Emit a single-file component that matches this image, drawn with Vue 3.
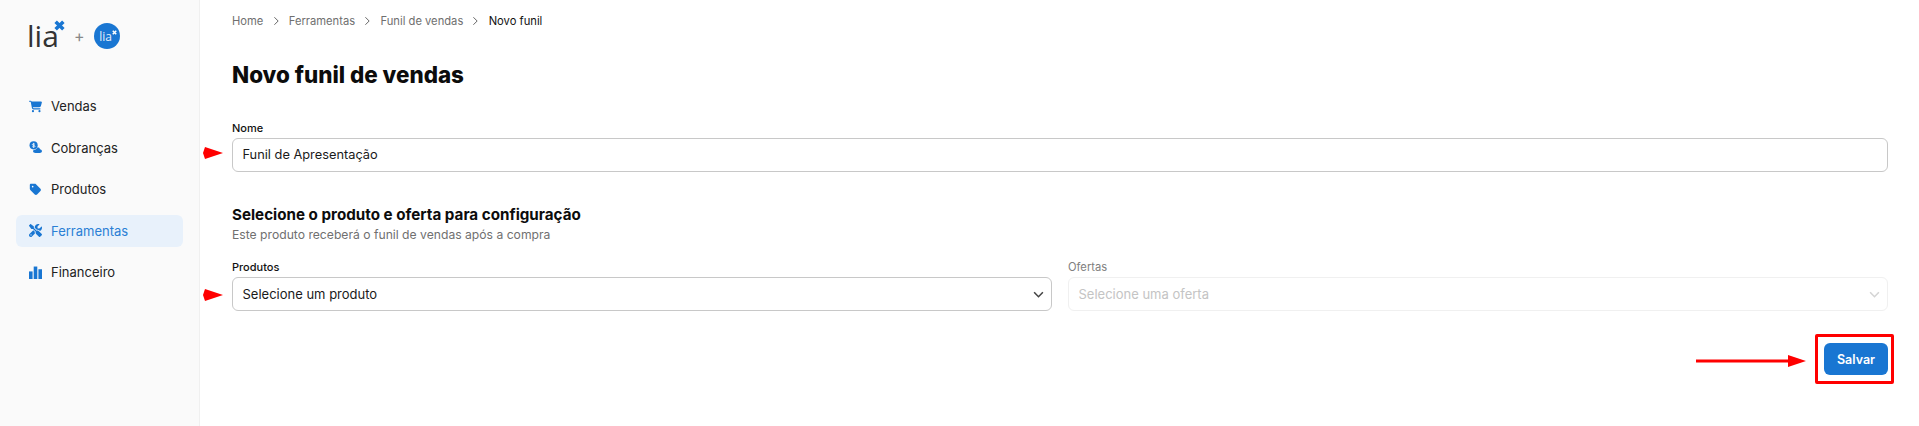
<template>
<div class="layout">
    <aside class="sidebar">
        <div class="brand">
            <div class="logo">
                <span class="logo__text">lia</span>
                <svg class="logo__x" viewBox="0 0 10 10"><path d="M1.5 1.5l7 7M8.5 1.5l-7 7" /></svg>
            </div>
            <span class="brand__plus">+</span>
            <div class="badge">
                <span class="badge__text">lia</span>
                <svg class="badge__x" viewBox="0 0 10 10"><path d="M1.5 1.5l7 7M8.5 1.5l-7 7" /></svg>
            </div>
        </div>
        <nav class="nav">
            <a v-for="item in menu" :key="item.label" class="nav__item" :class="{ 'nav__item--active': item.active }">
                <svg class="nav__icon" :viewBox="item.box" v-html="item.icon"></svg>
                <span>{{ item.label }}</span>
            </a>
        </nav>
    </aside>

    <main class="content">
        <div class="crumbs">
            <template v-for="(crumb, i) in crumbs" :key="crumb">
                <span :class="{ 'crumbs__last': i === crumbs.length - 1 }">{{ crumb }}</span>
                <svg v-if="i < crumbs.length - 1" class="crumbs__sep" viewBox="0 0 8 12"><path d="M1.5 1.5L6 6l-4.5 4.5" /></svg>
            </template>
        </div>

        <h1 class="title">Novo funil de vendas</h1>

        <div class="field">
            <label class="label">Nome</label>
            <div class="control">
                <svg class="mark mark--name" viewBox="0 0 20 12"><path d="M0 6l2-6 18 6-18 6z" /></svg>
                <input class="input input--name" type="text" v-model="name">
            </div>
        </div>

        <h2 class="subtitle">Selecione o produto e oferta para configuração</h2>
        <p class="hint">Este produto receberá o funil de vendas após a compra</p>

        <div class="selects">
            <div class="field">
                <label class="label">Produtos</label>
                <div class="control">
                    <svg class="mark" viewBox="0 0 20 12"><path d="M0 6l2-6 18 6-18 6z" /></svg>
                    <div class="input select">
                        <span>Selecione um produto</span>
                        <svg class="select__arrow" viewBox="0 0 12 8"><path d="M1 1.5l5 5 5-5" /></svg>
                    </div>
                </div>
            </div>
            <div class="field field--off">
                <label class="label">Ofertas</label>
                <div class="input select">
                    <span>Selecione uma oferta</span>
                    <svg class="select__arrow" viewBox="0 0 12 8"><path d="M1 1.5l5 5 5-5" /></svg>
                </div>
            </div>
        </div>

        <div class="actions">
            <div class="save">
                <svg class="save__arrow" viewBox="0 0 110 12"><path d="M0 4.500h92V0l18 6-18 6V7.500H0z" /></svg>
                <span class="save__box"></span>
                <button class="btn">Salvar</button>
            </div>
        </div>
    </main>
</div>
</template>

<script setup>
import { ref } from 'vue'

const name = ref('Funil de Apresentação')
const crumbs = ['Home', 'Ferramentas', 'Funil de vendas', 'Novo funil']

const menu = [
    {
        label: 'Vendas',
        box: '0 0 576 512',
        icon: '<path d="M0 24C0 10.7 10.7 0 24 0H69.5c22 0 41.5 12.8 50.6 32h411c26.3 0 45.5 25 38.6 50.4l-41 152.3c-8.5 31.4-37 53.3-69.5 53.3H170.7l5.4 28.5c2.2 11.3 12.1 19.5 23.6 19.5H488c13.3 0 24 10.7 24 24s-10.7 24-24 24H199.7c-34.6 0-64.3-24.6-70.7-58.5L77.4 54.5c-.7-3.8-4-6.5-7.9-6.5H24C10.7 48 0 37.3 0 24zM128 464a48 48 0 1 1 96 0 48 48 0 1 1 -96 0zm336-48a48 48 0 1 1 0 96 48 48 0 1 1 0-96z"/>'
    },
    {
        label: 'Cobranças',
        box: '0 0 24 24',
        icon: '<circle cx="8.500" cy="8" r="7.500"/><path d="M11 6.500c-.5-1-1.500-1.300-2.500-1.300-1.300 0-2.300.6-2.300 1.500 0 2 5 1 5 3 0 1-1 1.600-2.500 1.600-1.200 0-2.200-.5-2.700-1.300M8.500 3.500v9" fill="none" stroke="#fafafa" stroke-width="1.500"/><path d="M16 11.500c2.200 0 4 1.500 4.300 3.500 2 .3 3.700 1.700 3.700 3.500 0 2.500-2 3.500-4 3.500h-8c-2.500 0-4.500-1.200-4.500-3.200 0-1 .5-1.800 1.200-2.300 3 0 5.500-2 7.300-5z"/>'
    },
    {
        label: 'Produtos',
        box: '0 0 448 512',
        icon: '<path d="M0 80V229.500c0 17 6.700 33.300 18.700 45.300l176 176c25 25 65.500 25 90.500 0L418.700 317.300c25-25 25-65.500 0-90.500l-176-176c-12-12-28.300-18.700-45.300-18.700H48C21.500 32 0 53.500 0 80zm112 32a32 32 0 1 1 0 64 32 32 0 1 1 0-64z"/>'
    },
    {
        label: 'Ferramentas',
        active: true,
        box: '0 0 512 512',
        icon: '<path d="M78.600 5C69.100-2.400 55.600-1.500 47 7L7 47c-8.500 8.500-9.400 22-2.100 31.600l80 104c4.500 5.900 11.600 9.400 19 9.400h54.100l109 109c-14.700 29-10 65.400 14.300 89.600l112 112c12.500 12.500 32.800 12.500 45.300 0l64-64c12.500-12.500 12.500-32.800 0-45.300l-112-112c-24.200-24.200-60.600-29-89.600-14.300l-109-109V104c0-7.500-3.500-14.500-9.400-19L78.600 5zM19.900 396.100C7.200 408.800 0 426.100 0 444.100C0 481.600 30.400 512 67.900 512c18 0 35.300-7.200 48-19.900L233.700 374.300c-7.800-20.900-9-43.600-3.600-65.100l-61.700-61.700L19.900 396.100zM512 144c0-10.500-1.100-20.700-3.200-30.500c-2.400-11.200-16.100-14.100-24.200-6l-63.900 63.900c-3 3-7.100 4.700-11.300 4.700H352c-8.800 0-16-7.200-16-16V102.600c0-4.200 1.700-8.300 4.700-11.300l63.900-63.900c8.100-8.100 5.200-21.800-6-24.200C388.700 1.100 378.500 0 368 0C288.500 0 224 64.500 224 144l0 .8 85.300 85.300c36-9.100 75.800 .5 104 28.700L429 274.500c49-23 83-72.800 83-130.500zM56 432a24 24 0 1 1 48 0 24 24 0 1 1 -48 0z"/>'
    },
    {
        label: 'Financeiro',
        box: '0 0 12 12',
        icon: '<rect x="0" y="5" width="3.300" height="7"/><rect x="4.350" y="0.500" width="3.300" height="11.500"/><rect x="8.700" y="3" width="3.300" height="9"/>'
    }
]
</script>

<style>
html, body {
    margin: 0;
    background: #fff;
}
</style>

<style scoped>
.layout {
    display: flex;
    min-height: 426px;
    font-family: Inter, "Liberation Sans", sans-serif;
    color: #111;
}

.sidebar {
    flex: 0 0 200px;
    box-sizing: border-box;
    padding: 0 16px;
    background: #fafafa;
    border-right: 1px solid #f0f0f0;
}

.brand {
    height: 90px;
    display: flex;
    align-items: center;
    padding: 0 0 18px 11px;
    box-sizing: border-box;
}

.logo {
    position: relative;
    width: 38px;
    height: 32px;
    display: flex;
    align-items: center;
}

.logo__text {
    font-family: "Open Sans", sans-serif;
    font-weight: 400;
    font-size: 30px;
    line-height: 32px;
    color: #333;
}

.logo__x {
    position: absolute;
    top: 0;
    left: 27px;
    width: 11px;
    height: 11px;
    fill: none;
    stroke: #1976d2;
    stroke-width: 3.2;
}

.brand__plus {
    margin-left: 9px;
    font-size: 16px;
    line-height: 20px;
    color: #888;
}

.badge {
    position: relative;
    margin-left: 9px;
    width: 26px;
    height: 26px;
    border-radius: 50%;
    background: #1976d2;
    display: flex;
    align-items: center;
    justify-content: center;
}

.badge__text {
    font-family: "Open Sans", sans-serif;
    font-weight: 400;
    font-size: 12px;
    color: #e8f1fb;
    margin-right: 2px;
}

.badge__x {
    position: absolute;
    top: 7px;
    right: 3px;
    width: 5px;
    height: 5px;
    fill: none;
    stroke: #fff;
    stroke-width: 3;
}

.nav {
    display: flex;
    flex-direction: column;
    gap: 9.6px;
}

.nav__item {
    height: 32px;
    display: flex;
    align-items: center;
    gap: 9px;
    padding-left: 13px;
    border-radius: 6px;
    font-size: 13px;
    color: #222;
}

.nav__item--active {
    background: #e8f1fb;
    color: #2a7fd5;
}

.nav__icon {
    width: 13px;
    height: 13px;
    flex: none;
    fill: #1976d2;
}

.content {
    flex: 1;
    min-width: 0;
    padding: 12px 31px 0 32px;
}

.crumbs {
    height: 18px;
    display: flex;
    align-items: center;
    gap: 9.2px;
    font-size: 11.2px;
    color: #6f6f6f;
}

.crumbs__last {
    color: #111;
}

.crumbs__sep {
    width: 7px;
    height: 10px;
    fill: none;
    stroke: #666;
    stroke-width: 1.2;
}

.title {
    margin: 29px 0 29px;
    font-size: 22.4px;
    line-height: 32px;
    font-weight: 800;
    color: #0c0c0c;
}

.field {
    flex: 1;
    min-width: 0;
}

.label {
    display: block;
    margin-bottom: 2px;
    font-size: 11px;
    line-height: 16px;
    font-weight: 500;
    color: #111;
}

.control {
    position: relative;
}

.mark {
    position: absolute;
    left: -29px;
    top: 12px;
    width: 20px;
    height: 12px;
    fill: #f00;
}

.mark--name {
    top: 9px;
}

.input {
    display: block;
    box-sizing: border-box;
    width: 100%;
    height: 34px;
    padding: 0 10px 0 9.5px;
    border: 1px solid #c8c8c8;
    border-radius: 6px;
    background: #fff;
    font-family: inherit;
    font-size: 13px;
    color: #1a1a1a;
    outline: none;
}

.input--name {
    padding-bottom: 2px;
    font-size: 12.8px;
}

.subtitle {
    margin: 31px 0 0;
    font-size: 15.2px;
    line-height: 24px;
    font-weight: 700;
    color: #0c0c0c;
}

.hint {
    margin: 0;
    font-size: 12.16px;
    line-height: 16px;
    color: #707070;
}

.selects {
    display: flex;
    gap: 16px;
    margin-top: 16px;
}

.select {
    display: flex;
    align-items: center;
    justify-content: space-between;
    padding-right: 7px;
}

.select__arrow {
    width: 11px;
    height: 7px;
    fill: none;
    stroke: #444;
    stroke-width: 1.8;
}

.field--off .label {
    color: #808080;
    font-weight: 400;
    font-size: 11.2px;
}

.field--off .input {
    border-color: #f0f0f0;
    color: #c4c4c4;
}

.field--off .select__arrow {
    stroke: #d4d4d4;
}

.actions {
    display: flex;
    justify-content: flex-end;
    margin-top: 32px;
}

.save {
    position: relative;
}

.save__box {
    position: absolute;
    inset: -9px -6px -9px -9px;
    border: 3px solid #f00;
    border-radius: 2px;
    box-sizing: border-box;
}

.save__arrow {
    position: absolute;
    right: 82px;
    top: 12px;
    width: 110px;
    height: 12px;
    fill: #f00;
}

.btn {
    display: block;
    width: 64px;
    height: 32px;
    border: none;
    border-radius: 6px;
    background: #1976d2;
    color: #fff;
    font-family: inherit;
    font-size: 12.5px;
    font-weight: 600;
}
</style>
